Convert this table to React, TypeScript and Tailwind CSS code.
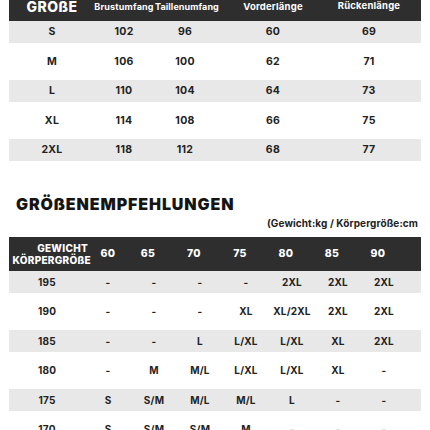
import React from "react";

const font = { fontFamily: "Inter, 'Open Sans', sans-serif" };

const top = [
  ["S", "102", "96", "60", "69"],
  ["M", "106", "100", "62", "71"],
  ["L", "110", "104", "64", "73"],
  ["XL", "114", "108", "66", "75"],
  ["2XL", "118", "112", "68", "77"],
];

const rec: [string, string[]][] = [
  ["195", ["-", "-", "-", "-", "2XL", "2XL", "2XL"]],
  ["190", ["-", "-", "-", "XL", "XL/2XL", "2XL", "2XL"]],
  ["185", ["-", "-", "L", "L/XL", "L/XL", "XL", "2XL"]],
  ["180", ["-", "M", "M/L", "L/XL", "L/XL", "XL", "-"]],
  ["175", ["S", "S/M", "M/L", "M/L", "L", "-", "-"]],
  ["170", ["S", "S/M", "S/M", "M", "-", "-", "-"]],
];

const topW = ["w-[84px]", "w-[62px]", "w-[60px]", "w-[116px]", "w-[76px]"];

export default function App() {
  return (
    <div className="w-[430px] h-[430px] overflow-hidden bg-white text-[#222]" style={font}>
      {/* top table */}
      <div className="mx-[9px] w-[412px]">
        <div className="flex h-[21px] bg-[#2e2e2e] text-white">
          <div className={`${topW[0]} pl-[2px] text-center text-[14px] font-extrabold leading-[13px] tracking-[0.5px]`}>GROßE</div>
          <div className={`${topW[1]} text-center text-[9px] font-bold leading-[13px] tracking-[0.2px] whitespace-nowrap`}>Brustumfang</div>
          <div className={`${topW[2]} text-center text-[9px] font-bold leading-[13px] tracking-[0.1px] whitespace-nowrap`}>Taillenumfang</div>
          <div className={`${topW[3]} text-center text-[9.5px] font-bold leading-[13px] tracking-[0.2px] whitespace-nowrap`}>Vorderlänge</div>
          <div className={`${topW[4]} text-center text-[9.5px] font-bold leading-[11px] tracking-[0.2px] whitespace-nowrap`}>Rückenlänge</div>
        </div>
        {top.map((r, i) => (
          <div
            key={i}
            className={`flex items-center text-[10.5px] font-bold tracking-[0.3px] ${i % 2 === 0 ? "h-[22px] bg-[#e8e8e8]" : "h-[37px] bg-white"}`}
          >
            {r.map((c, j) => (
              <div key={j} className={`${topW[j]} text-center ${j === 0 ? "pl-[2px]" : ""}`}>{c}</div>
            ))}
          </div>
        ))}
      </div>

      {/* title */}
      <div className="mt-[33px] pl-[16px] text-[16px] leading-[20px] font-black tracking-[0.9px] text-[#151515]">
        GRÖßENEMPFEHLUNGEN
      </div>
      <div className="mt-[2px] pl-[267px] text-[10px] leading-[14px] font-bold tracking-[0.1px] whitespace-nowrap">
        (Gewicht:kg / Körpergröße:cm
      </div>

      {/* recommendation table */}
      <div className="mx-[9px] mt-[7px] w-[412px]">
        <div className="flex h-[34px] items-center bg-[#2e2e2e] text-white text-[10px] font-extrabold tracking-[0.3px]">
          <div className="w-[82px] text-right leading-[12px] whitespace-nowrap">
            <div className="pr-[3px]">GEWICHT</div>
            <div>KÖRPERGRÖßE</div>
          </div>
          <div className="w-[34px] text-center text-[10.5px]">60</div>
          {["65", "70", "75", "80", "85", "90"].map((h) => (
            <div key={h} className="w-[46px] text-center text-[10.5px]">{h}</div>
          ))}
        </div>
        {rec.map(([h, vals], i) => (
          <div
            key={h}
            className={`flex items-center text-[10px] font-bold tracking-[0.2px] ${i % 2 === 0 ? "h-[22px] bg-[#e8e8e8]" : "h-[37px] bg-white"}`}
          >
            <div className="w-[76px] text-center">{h}</div>
            {vals.map((v, j) => (
              <div key={j} className="w-[46px] text-center whitespace-nowrap">{v}</div>
            ))}
          </div>
        ))}
      </div>
    </div>
  );
}
